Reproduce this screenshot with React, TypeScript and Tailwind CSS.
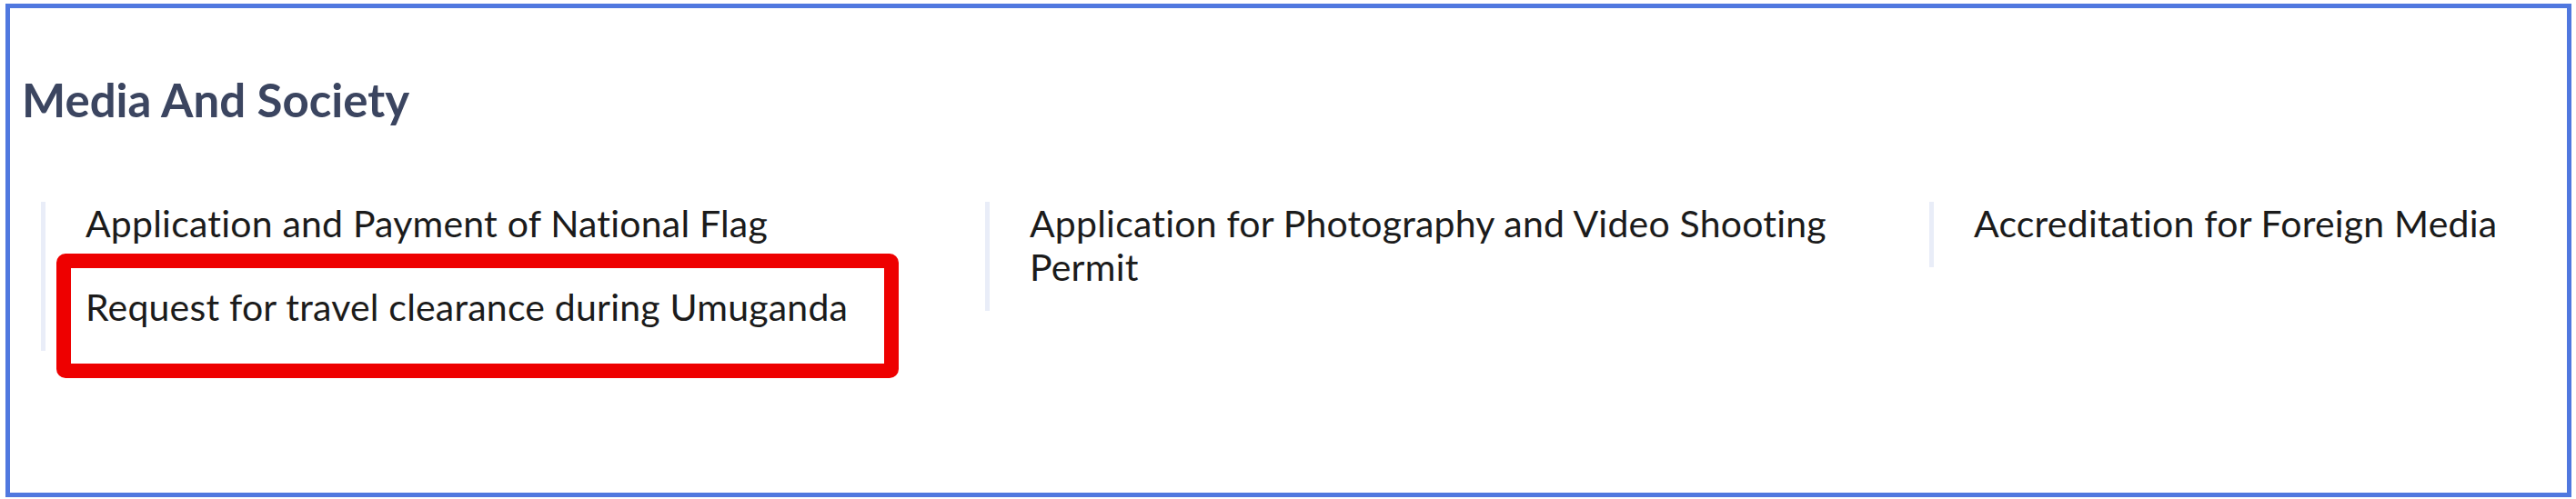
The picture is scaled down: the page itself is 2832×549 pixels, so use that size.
const columns: string[][] = [
  ['Application and Payment of National Flag', 'Request for travel clearance during Umuganda'],
  ['Application for Photography and Video Shooting Permit'],
  ['Accreditation for Foreign Media'],
]

export default function App() {
  return (
    <div className="relative w-[2832px] h-[549px] bg-white pt-[4px] pl-[6px] font-['Lato','Liberation_Sans',sans-serif]">
      <div className="w-[2821px] h-[543px] border-[5px] border-[#5078df] bg-white overflow-hidden pl-[13px]">
        <h2 className="mt-[75px] text-[51px] leading-[52px] font-bold text-[#3b4560]">Media And Society</h2>

        <div className="mt-[86px] ml-[21px] grid grid-cols-[1038px_1038px_1038px] items-start">
          {columns.map((items, i) => (
            <ul key={i} className="border-l-[5px] border-[#e9edf8] pl-[44px] pr-[40px] pb-[24px] flex flex-col gap-[44px]">
              {items.map((label) => (
                <li key={label} className="text-[41px] leading-[48px] tracking-[0.2px] text-[#1b1b1b]">
                  {label}
                </li>
              ))}
            </ul>
          ))}
        </div>
      </div>

      {/* highlight around the Umuganda item */}
      <div className="absolute left-[62px] top-[279px] w-[926px] h-[137px] border-[16px] border-[#ee0000] rounded-[10px]" />
    </div>
  )
}
